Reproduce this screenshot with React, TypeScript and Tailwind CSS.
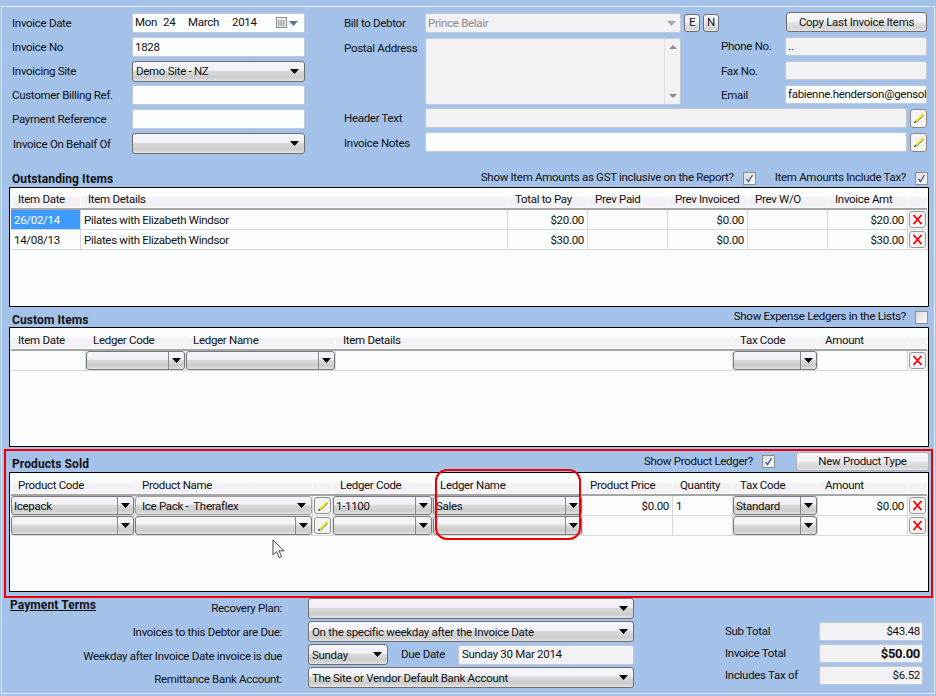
import React from 'react';

const selectBg = 'bg-[linear-gradient(to_bottom,#f4f3f7_0%,#f2f1f5_42%,#d9d9d9_50%,#cbcbcb_80%,#e2e2e2_100%)]';
const inputBase = 'border border-[#c3cad6] rounded-[2px] flex items-center px-[2px] whitespace-nowrap overflow-hidden';
const title = "font-bold text-[12px] tracking-[0.1px]";

const Arrow: React.FC<{ color?: string }> = ({ color = '#000' }) => (
  <svg width="9" height="5" viewBox="0 0 9 5" className="shrink-0"><path d="M0 0H9L4.5 5Z" fill={color} /></svg>
);

const Input: React.FC<{ value?: string; disabled?: boolean; className?: string }> = ({ value, disabled, className = '' }) => (
  <div className={`${inputBase} ${disabled ? 'bg-[#f2f1f4]' : 'bg-[#fcfdfd]'} ${className}`}>{value}</div>
);

const Select: React.FC<{ value?: string; className?: string }> = ({ value, className = '' }) => (
  <div className={`flex items-center justify-between pl-[3px] pr-[5px] border border-[#707070] rounded-[3px] whitespace-nowrap ${selectBg} ${className}`}>
    <span className="pt-[2px]">{value}</span>
    <Arrow />
  </div>
);

const GridSelect: React.FC<{ value?: string }> = ({ value }) => (
  <div className={`flex items-stretch h-full border border-[#7a7a7a] rounded-[3px] whitespace-nowrap ${selectBg}`}>
    <span className="flex-1 pl-[2px] pt-[2px] flex items-center overflow-hidden">{value}</span>
    <span className="w-[16px] flex items-center justify-center border-l border-[#8a8a8a]"><Arrow /></span>
  </div>
);

const Btn: React.FC<{ children: React.ReactNode; className?: string }> = ({ children, className = '' }) => (
  <div className={`flex items-center justify-center border border-[#707070] rounded-[3px] bg-[linear-gradient(to_bottom,#f6f5f8_0%,#f2f1f5_45%,#e2e2e2_55%,#d4d4d4_85%,#e8e8e8_100%)] ${className}`}>{children}</div>
);

const Pencil: React.FC<{ className?: string }> = ({ className = '' }) => (
  <div className={`flex items-center justify-center border border-[#8a8a8a] rounded-[3px] bg-[#f4f4f2] ${className}`}>
    <svg width="12" height="12" viewBox="0 0 12 12">
      <path d="M3 10.5L10.5 3" stroke="#55551a" strokeWidth="1" />
      <path d="M2.5 9.5L10 2" stroke="#f7ec00" strokeWidth="1.6" />
      <path d="M1 11L2 8.8L3.2 10Z" fill="#000" />
    </svg>
  </div>
);

const Del: React.FC = () => (
  <div className="mx-auto mt-[1px] w-[17px] h-[17px] flex items-center justify-center border border-[#999] rounded-[3px] bg-[#f3f2f4]">
    <svg width="11" height="11" viewBox="0 0 11 11"><path d="M1.5 1L9.5 10M9.5 1L1.5 10" stroke="#f00000" strokeWidth="1.8" /></svg>
  </div>
);

const Check: React.FC<{ checked?: boolean }> = ({ checked }) => (
  <div className="w-[13px] h-[13px] border border-[#8f8f8f] bg-[linear-gradient(135deg,#dcdcdc,#fafafa)] flex items-center justify-center shrink-0">
    {checked && <svg width="9" height="9" viewBox="0 0 9 9"><path d="M1.5 5L3.5 7.5L7.5 1" fill="none" stroke="#4a5f9c" strokeWidth="1.4" /></svg>}
  </div>
);

const HeaderCells: React.FC<{ cols: string; labels: string[]; h: string }> = ({ cols, labels, h }) => (
  <div className={`grid ${cols} ${h} border-b-2 border-[#a6a6a6]`}>
    {labels.map((l, i) => (
      <div key={i} className="pl-[7px] pt-[4px] flex items-center border-r border-[#fbfdfd] bg-[linear-gradient(to_bottom,#fbfdfd_0%,#fbfdfd_45%,#f3f1f5_46%,#f3f1f5_90%,#fbfdfd_100%)] whitespace-nowrap">{l}</div>
    ))}
  </div>
);

const Cell: React.FC<{ children?: React.ReactNode; right?: boolean; active?: boolean; flush?: boolean }> = ({ children, right, active, flush }) => (
  <div className={`h-[20px] border-r border-b border-[#d6d9d9] whitespace-nowrap overflow-hidden ${active ? 'bg-[#3f9bfb] text-white' : ''} ${flush ? '' : 'pl-[3px] pr-[3px] pt-[2px] flex items-center'} ${right ? 'justify-end' : ''}`}>{children}</div>
);

const Table: React.FC<{ children: React.ReactNode }> = ({ children }) => (
  <div className="ml-[7px] w-[920px] h-[120px] border border-black bg-[#fbfdfd] pl-[1px] pr-[1px] relative">{children}</div>
);

const outCols = 'grid-cols-[70px_427px_80px_80px_80px_80px_80px_20px]';
const cusCols = 'grid-cols-[75px_100px_150px_397px_85px_90px_20px]';
const proCols = 'grid-cols-[124px_178px_20px_100px_150px_90px_60px_85px_90px_20px]';

const outstanding = [
  { date: '26/02/14', detail: 'Pilates with Elizabeth Windsor', total: '$20.00', inv: '$0.00', amt: '$20.00', active: true },
  { date: '14/08/13', detail: 'Pilates with Elizabeth Windsor', total: '$30.00', inv: '$0.00', amt: '$30.00', active: false },
];

const products = [
  { code: 'Icepack', name: 'Ice Pack -  Theraflex', ledger: '1-1100', lname: 'Sales', price: '$0.00', qty: '1', tax: 'Standard', amount: '$0.00' },
  { code: '', name: '', ledger: '', lname: '', price: '', qty: '', tax: '', amount: '' },
];

export default function App() {
  return (
    <div className="w-[936px] h-[696px] bg-[#a4c1ea] overflow-hidden pt-[6px] pl-[1px] text-[11.5px] leading-none text-[#111] font-['Roboto','Liberation_Sans',sans-serif] tracking-[-0.3px]">
      <div className="w-[934px] h-[688px] border border-[#e6eef9]">
        {/* Invoice header */}
        <div className="h-[163px] pt-[6px] pl-[10px] flex">
          <div className="w-[293px] flex flex-col gap-[4px]">
            <div className="flex items-center h-[20px]">
              <span className="w-[120px] pt-[2px]">Invoice Date</span>
              <div className={`${inputBase} bg-[#fcfdfd] w-[173px] h-[20px] justify-between pr-[6px]`}>
                <span className="flex"><span className="w-[28px]">Mon</span><span className="w-[25px]">24</span><span className="w-[44px]">March</span><span>2014</span></span>
                <span className="flex items-center gap-[1px]">
                  <svg width="12" height="12" viewBox="0 0 12 12"><rect x="0.5" y="0.5" width="10" height="10" fill="#e8e8ea" stroke="#8c8c94" /><path d="M2.5 3V9M5 3V9M7.5 3V9M2 4H9M2 6H9M2 8H9" stroke="#9a9aa4" strokeWidth="0.7" /></svg>
                  <Arrow color="#5a7396" />
                </span>
              </div>
            </div>
            <div className="flex items-center h-[20px]"><span className="w-[120px] pt-[2px]">Invoice No</span><Input value="1828" className="w-[173px] h-[20px] pt-[2px]" /></div>
            <div className="flex items-center h-[20px]"><span className="w-[120px] pt-[2px]">Invoicing Site</span><Select value="Demo Site - NZ" className="w-[173px] h-[21px]" /></div>
            <div className="flex items-center h-[20px]"><span className="w-[120px] pt-[2px]">Customer Billing Ref.</span><Input className="w-[173px] h-[20px]" /></div>
            <div className="flex items-center h-[20px]"><span className="w-[120px] pt-[2px]">Payment Reference</span><Input className="w-[173px] h-[20px]" /></div>
            <div className="flex items-center h-[21px]"><span className="w-[120px] pl-[1px] pt-[2px]">Invoice On Behalf Of</span><Select className="w-[173px] h-[21px]" /></div>
          </div>

          <div className="ml-[39px] w-[583px]">
            <div className="flex h-[95px]">
              <div className="w-[377px]">
                <div className="flex items-center h-[20px]">
                  <span className="w-[81px] pt-[2px]">Bill to Debtor</span>
                  <div className={`${inputBase} bg-[#f2f1f4] text-[#8a8a8a] w-[256px] h-[20px] justify-between pr-[4px]`}>
                    <span className="pt-[2px]">Prince Belair</span>
                    <Arrow color="#a8a8a8" />
                  </div>
                  <Btn className="ml-[3px] w-[16px] h-[18px]">E</Btn>
                  <Btn className="ml-[3px] w-[16px] h-[18px]">N</Btn>
                </div>
                <div className="flex mt-[5px]">
                  <span className="w-[81px] pt-[5px]">Postal Address</span>
                  <div className="w-[256px] h-[67px] border border-[#c3cad6] rounded-[2px] bg-[#f2f1f4] flex justify-end">
                    <div className="w-[16px] h-full border-l border-[#dfdfe3] flex flex-col justify-between items-center py-[6px]">
                      <svg width="8" height="4" viewBox="0 0 8 4"><path d="M0 4H8L4 0Z" fill="#8c8c8c" /></svg>
                      <svg width="8" height="4" viewBox="0 0 8 4"><path d="M0 0H8L4 4Z" fill="#8c8c8c" /></svg>
                    </div>
                  </div>
                </div>
              </div>
              <div className="w-[206px]">
                <Btn className="ml-[65px] w-[141px] h-[20px] -mt-[1px] pt-[2px]">Copy Last Invoice Items</Btn>
                <div className="flex items-center h-[19px] mt-[5px]"><span className="w-[64px]">Phone No.</span><Input disabled value=".." className="w-[142px] h-[19px]" /></div>
                <div className="flex items-center h-[19px] mt-[5px]"><span className="w-[64px] pt-[2px]">Fax No.</span><Input disabled className="w-[142px] h-[19px]" /></div>
                <div className="flex items-center h-[19px] mt-[5px]"><span className="w-[64px] pt-[2px]">Email</span><Input value="fabienne.henderson@gensol" className="w-[142px] h-[19px]" /></div>
              </div>
            </div>
            <div className="flex items-center h-[20px]">
              <span className="w-[81px] pt-[1px]">Header Text</span>
              <Input disabled className="w-[482px] h-[20px]" />
              <Pencil className="ml-[3px] w-[17px] h-[19px]" />
            </div>
            <div className="flex items-center h-[20px] mt-[4px]">
              <span className="w-[81px] pt-[3px]">Invoice Notes</span>
              <Input className="w-[482px] h-[20px]" />
              <Pencil className="ml-[3px] w-[17px] h-[19px]" />
            </div>
          </div>
        </div>

        {/* Outstanding items */}
        <div className="h-[17px] pl-[10px] pr-[6px] flex items-center justify-between">
          <span className={title}>Outstanding Items</span>
          <div className="flex items-center -mt-[1px]">
            <span>Show Item Amounts as GST inclusive on the Report?</span>
            <span className="ml-[9px]"><Check checked /></span>
            <span className="ml-[19px]">Item Amounts Include Tax?</span>
            <span className="ml-[9px]"><Check checked /></span>
          </div>
        </div>
        <Table>
          <HeaderCells cols={outCols} h="h-[22px]" labels={['Item Date', 'Item Details', 'Total to Pay', 'Prev Paid', 'Prev Invoiced', 'Prev W/O', 'Invoice Amt', '']} />
          {outstanding.map((r) => (
            <div key={r.date} className={`grid ${outCols}`}>
              <Cell active={r.active}>{r.date}</Cell>
              <Cell>{r.detail}</Cell>
              <Cell right>{r.total}</Cell>
              <Cell />
              <Cell right>{r.inv}</Cell>
              <Cell />
              <Cell right>{r.amt}</Cell>
              <Cell flush><Del /></Cell>
            </div>
          ))}
        </Table>

        {/* Custom items */}
        <div className="h-[20px] pl-[10px] pr-[6px] flex items-center justify-between">
          <span className={`${title} mt-[5px]`}>Custom Items</span>
          <div className="flex items-center">
            <span>Show Expense Ledgers in the Lists?</span>
            <span className="ml-[9px]"><Check /></span>
          </div>
        </div>
        <Table>
          <HeaderCells cols={cusCols} h="h-[23px]" labels={['Item Date', 'Ledger Code', 'Ledger Name', 'Item Details', 'Tax Code', 'Amount', '']} />
          <div className={`grid ${cusCols}`}>
            <Cell />
            <Cell flush><GridSelect /></Cell>
            <Cell flush><GridSelect /></Cell>
            <Cell />
            <Cell flush><GridSelect /></Cell>
            <Cell />
            <Cell flush><Del /></Cell>
          </div>
        </Table>

        {/* Products sold */}
        <div className="relative ml-[2px] mt-[2px] w-[929px] h-[149px] border-2 border-[#f00000]">
          <div className="h-[21px] pl-[6px] pr-[2px] flex items-center justify-between">
            <span className={`${title} mt-[4px]`}>Products Sold</span>
            <div className="flex items-center">
              <span>Show Product Ledger?</span>
              <span className="ml-[9px]"><Check checked /></span>
              <Btn className="ml-[21px] w-[133px] h-[19px] border-[#b4b4b4]">New Product Type</Btn>
            </div>
          </div>
          <div className="-ml-[4px]">
            <Table>
              <HeaderCells cols={proCols} h="h-[23px]" labels={['Product Code', 'Product Name', '', 'Ledger Code', 'Ledger Name', 'Product Price', 'Quantity', 'Tax Code', 'Amount', '']} />
              {products.map((p, i) => (
                <div key={i} className={`grid ${proCols}`}>
                  <Cell flush><GridSelect value={p.code} /></Cell>
                  <Cell flush>
                    {p.name
                      ? <div className={`h-full pl-[6px] pr-[5px] flex items-center justify-between border border-[#a0a0a0] rounded-[3px] ${selectBg}`}><span className="whitespace-pre pt-[2px]">{p.name}</span><Arrow /></div>
                      : <GridSelect />}
                  </Cell>
                  <Cell flush><Pencil className="mt-[1px] mx-auto w-[17px] h-[17px]" /></Cell>
                  <Cell flush><GridSelect value={p.ledger} /></Cell>
                  <Cell flush><GridSelect value={p.lname} /></Cell>
                  <Cell right>{p.price}</Cell>
                  <Cell>{p.qty}</Cell>
                  <Cell flush><GridSelect value={p.tax} /></Cell>
                  <Cell right>{p.amount}</Cell>
                  <Cell flush><Del /></Cell>
                </div>
              ))}
              {/* mouse pointer left in the capture */}
              <svg className="absolute left-[262px] top-[66px]" width="14" height="20" viewBox="0 0 14 20">
                <path d="M1 1V16L4.6 12.8L7.2 18.6L9.6 17.6L7 11.8H12Z" fill="#fff" stroke="#444" strokeWidth="1" />
              </svg>
            </Table>
          </div>
          {/* hand-drawn highlight around Ledger Name */}
          <div className="absolute left-[429px] top-[18px] w-[146px] h-[71px] border-2 border-[#f00000] rounded-[12px]" />
        </div>

        {/* Payment terms and totals */}
        <div className="flex pl-[8px]">
          <span className={`${title} w-[88px] underline mt-[1px] h-[14px] whitespace-nowrap`}>Payment Terms</span>
          <div className="w-[184px] flex flex-col gap-[2px] text-right">
            <div className="h-[21px] flex items-center justify-end mt-[1px] pb-[2px]">Recovery Plan:</div>
            <div className="h-[21px] flex items-center justify-end">Invoices to this Debtor are Due:</div>
            <div className="h-[21px] flex items-center justify-end whitespace-nowrap pt-[2px]">Weekday after Invoice Date invoice is due</div>
            <div className="h-[21px] flex items-center justify-end pt-[2px]">Remittance Bank Account:</div>
          </div>
          <div className="ml-[26px] w-[326px] flex flex-col gap-[2px]">
            <Select className="h-[21px]" />
            <Select value="On the specific weekday after the Invoice Date" className="h-[21px]" />
            <div className="flex items-center h-[21px]">
              <Select value="Sunday" className="w-[80px] h-[21px]" />
              <span className="ml-[13px] w-[57px]">Due Date</span>
              <Input disabled value="Sunday 30 Mar 2014" className="w-[176px] h-[20px] pl-[3px]" />
            </div>
            <Select value="The Site or Vendor Default Bank Account" className="h-[21px]" />
          </div>
          <div className="ml-[91px] w-[198px] flex flex-col gap-[3px] mt-[24px]">
            <div className="flex items-center h-[19px]"><span className="w-[94px]">Sub Total</span><Input disabled value="$43.48" className="w-[104px] h-[19px] justify-end pr-[2px]" /></div>
            <div className="flex items-center h-[19px]"><span className="w-[94px]">Invoice Total</span><Input disabled value="$50.00" className="w-[104px] h-[19px] justify-end pr-[2px] font-bold text-[13px]" /></div>
            <div className="flex items-center h-[19px]"><span className="w-[94px]">Includes Tax of</span><Input disabled value="$6.52" className="w-[104px] h-[19px] justify-end pr-[2px]" /></div>
          </div>
        </div>
      </div>
    </div>
  );
}
